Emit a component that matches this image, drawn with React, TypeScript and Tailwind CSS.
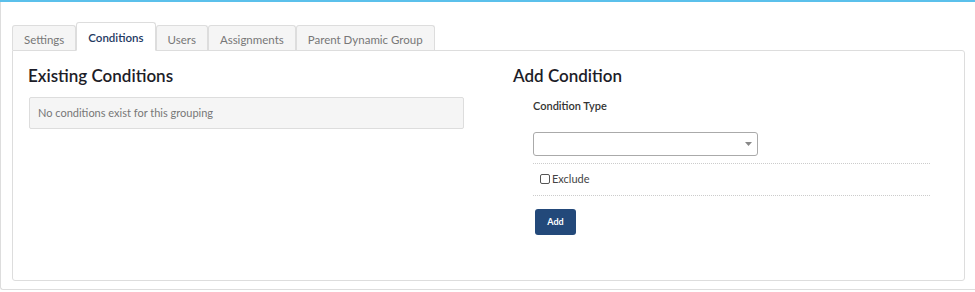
import React from 'react';

const tabs = ['Settings', 'Conditions', 'Users', 'Assignments', 'Parent Dynamic Group'];

function Tab({ label, active }: { label: string; active: boolean }) {
  if (active) {
    return (
      <div className="relative -mb-px h-[29px] px-[11px] pt-[6px] bg-white border border-[#dddddd] border-b-white rounded-t-[3px] text-[11.5px] font-semibold text-[#1f3a63]">
        {label}
      </div>
    );
  }
  return (
    <div className="h-[25px] mt-[3px] px-[11px] pt-[5px] bg-[#f5f5f5] border border-[#dddddd] border-b-0 rounded-t-[3px] text-[11.5px] text-[#777777]">
      {label}
    </div>
  );
}

export default function App() {
  return (
    <div
      className="w-[975px] h-[292px] bg-white border-t-2 border-[#5bc0eb] overflow-hidden"
      style={{ fontFamily: 'Lato, "Noto Sans", sans-serif' }}
    >
      <div className="h-[288px] border-l border-b border-[#dddddd] rounded-bl-[3px] pl-[11px] pt-[20px]">
        <div className="flex items-end">
          {tabs.map((t) => (
            <Tab key={t} label={t} active={t === 'Conditions'} />
          ))}
        </div>
        <div className="w-[953px] h-[231px] border border-[#dddddd] rounded-b-[3px] rounded-tr-[3px] px-[16px] pt-[14px] flex">
          <div className="w-[435px]">
            <h2 className="-ml-px text-[17px] font-semibold text-[#1d1d28] leading-[22px]">Existing Conditions</h2>
            <div className="mt-[10px] h-[32px] bg-[#f5f5f5] border border-[#dddddd] rounded-[2px] pl-[8px] flex items-center text-[11px] text-[#777777]">
              No conditions exist for this grouping
            </div>
          </div>
          <div className="ml-[50px] flex-1">
            <h2 className="-ml-px text-[17px] font-semibold text-[#1d1d28] leading-[22px]">Add Condition</h2>
            <div className="pl-[19px] pr-[18px]">
              <div className="mt-[11px] text-[11px] font-semibold text-[#333333]">Condition Type</div>
              <div className="mt-[17px] w-[225px] h-[24px] border border-[#aaaaaa] rounded-[3px] flex items-center justify-end pr-[5px]">
                <svg width="7" height="4" viewBox="0 0 7 4">
                  <path d="M0 0 L7 0 L3.5 4 Z" fill="#888888" />
                </svg>
              </div>
              <div className="mt-[7px] border-t border-dotted border-[#cccccc]" />
              <div className="h-[31px] flex items-center pl-[7px] text-[11px] text-[#444444]">
                <span className="inline-block w-[10px] h-[10px] border border-[#555555] rounded-[2px] mr-[2px] bg-white" />
                Exclude
              </div>
              <div className="border-t border-dotted border-[#cccccc]" />
              <button className="mt-[13px] ml-[2px] w-[41px] h-[26px] bg-[#23497a] rounded-[3px] text-white text-[9px] font-bold">
                Add
              </button>
            </div>
          </div>
        </div>
      </div>
    </div>
  );
}
